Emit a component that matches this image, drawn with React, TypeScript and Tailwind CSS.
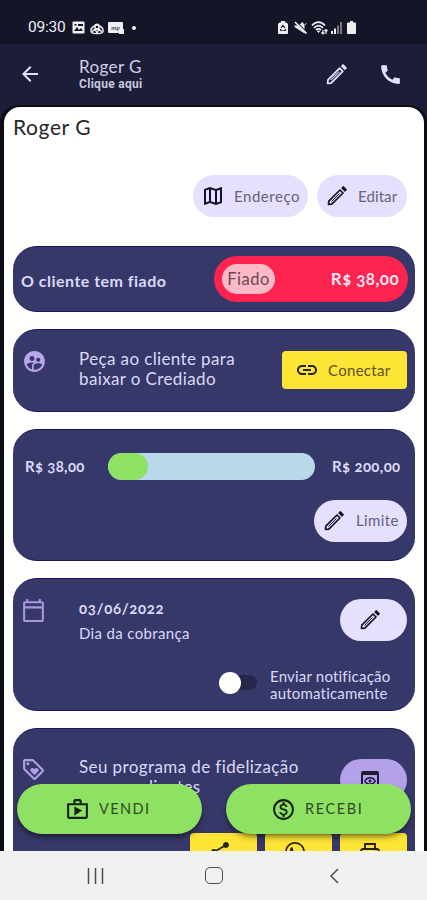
import type { ReactNode } from "react";
import {
  MdArrowBack,
  MdCall,
  MdLink,
  MdOutlineCalendarToday,
  MdOutlineLoyalty,
  MdOutlineMap,
  MdOutlineMonetizationOn,
  MdOutlinePreview,
  MdOutlinePrint,
  MdOutlineShop,
  MdShare,
  MdSupervisedUserCircle,
  MdWhatsapp,
} from "react-icons/md";

const PencilIcon = ({ size = 24 }: { size?: number }) => (
  <svg className="shrink-0" width={size} height={size} viewBox="0 0 24 24" fill="none" stroke="currentColor" strokeLinejoin="round">
    <path d="M3.500 20.500l0.300-3.300L15 6l3 3L6.800 20.200z" strokeWidth="1.700" />
    <path d="M6.500 17.500l8-8" strokeWidth="1" />
    <path d="M17 4l1.300-1.300 3 3L20 7z" fill="currentColor" strokeWidth="1.200" />
  </svg>
);

const Card = ({ className, children }: { className: string; children: ReactNode }) => (
  <section className={`shrink-0 rounded-[24px] border-y border-[#1c1558] bg-[#363869] text-[#dcd8f8] ${className}`}>
    {children}
  </section>
);

const StatusBar = () => (
  <div className="flex h-[44px] shrink-0 items-center bg-[#141526] pt-[11px] pl-[28px] font-['Roboto',sans-serif] text-[#efeff2]">
    <span className="w-[38px] text-[15.5px] tracking-[-0.2px]">09:30</span>
    <svg className="ml-[6px]" width="13" height="13" viewBox="0 0 13 13">
      <rect x="0.5" y="0.5" width="12" height="12" rx="1" fill="currentColor" />
      <path d="M2 10l3-4 2 3 2-2 2 3z" fill="#141526" />
      <rect x="2.5" y="3" width="2" height="1.5" fill="#141526" />
      <rect x="6" y="3" width="5" height="2" fill="#141526" />
    </svg>
    <svg className="ml-[5px]" width="14" height="14" viewBox="0 0 14 14" fill="none" stroke="currentColor" strokeWidth="1.4">
      <path d="M4.5 5a2.7 2.7 0 0 1 5 0c3 1.500 4.500 3.500 3 6.500-2 1.500-9 1.500-11 0-1.500-3 0-5 3-6.500z" />
      <circle cx="7" cy="6" r="2" />
      <path d="M2 11l3-3h4l3 3M5 8l2 4 2-4" />
    </svg>
    <span className="relative ml-[4px] flex h-[11px] w-[15px] items-center justify-center rounded-[1px] bg-[#efeff2] text-[6px] font-bold text-[#55576a]">
      mp
      <span className="absolute -right-px -bottom-px size-[5px] bg-[#efeff2]" />
    </span>
    <span className="ml-[9px] size-[4px] rounded-full bg-[#efeff2]" />

    <svg className="ml-[142px]" width="10" height="13" viewBox="0 0 10 13">
      <path d="M3 0h4v1.500h1.500L10 3v9a1 1 0 0 1-1 1H1a1 1 0 0 1-1-1V3l1.500-1.500H3z" fill="currentColor" />
      <path d="M3 7l2-2.500L7 7M2.500 9.500h2M5.500 9.500h2M2.500 8v1.500M7.500 8v1.500" fill="none" stroke="#141526" strokeWidth="1.200" />
    </svg>
    <svg className="ml-[6px]" width="13" height="13" viewBox="0 0 13 13" fill="none" stroke="currentColor">
      <path d="M0.500 4.500h4L8.500 1l2 3v8.500L6 9.500 0.500 6z" fill="currentColor" stroke="none" />
      <path d="M2 0.500l11 11" stroke="#141526" strokeWidth="1.200" />
      <path d="M1 1l11.500 11.500" strokeWidth="1.700" />
      <path d="M10.500 4l2-1.500" strokeWidth="1" />
    </svg>
    <svg className="ml-[4px]" width="17" height="14" viewBox="0 0 17 14" fill="none" stroke="currentColor">
      <path d="M1 4.500c4-4.500 9-4.500 13 0M3 6.800c3-3 6-3 9 0M5 9c2-1.700 3-1.700 5 0" strokeWidth="1.700" />
      <path d="M6.300 10.200h2.400L7.500 11.500z" fill="currentColor" />
      <path d="M12 9v4M10.300 11.500L12 13l1.500-1.500M15 13V9M13.500 10L15 8.500l1.500 1.500" strokeWidth="1.200" />
    </svg>
    <svg className="ml-[3px]" width="11" height="12" viewBox="0 0 11 12" fill="currentColor">
      <path d="M0 9h2v3H0zM3 6.500h2V12H3z" />
      <path d="M6 3.500h2V12H6zM9 0h2v12H9z" opacity="0.450" />
    </svg>
    <svg className="ml-[5px]" width="9" height="13" viewBox="0 0 9 13" fill="currentColor">
      <path d="M3 0h3v1.500h2A1 1 0 0 1 9 2.500V12a1 1 0 0 1-1 1H1a1 1 0 0 1-1-1V2.500a1 1 0 0 1 1-1h2z" />
    </svg>
  </div>
);

const Header = () => (
  <header className="flex h-[60px] shrink-0 items-center pl-[18px] text-[#e4e0fb]">
    <MdArrowBack size={24} />
    <div className="ml-[37px] flex w-[245px] flex-col">
      <span className="text-[17px] leading-[20px] tracking-[0.4px] text-[#d2cfec]">Roger G</span>
      <span className="font-['Roboto',sans-serif] text-[12px] leading-[14px] font-bold tracking-[0.3px] text-[#c9c8df]">Clique aqui</span>
    </div>
    <PencilIcon size={25} />
    <MdCall size={25} className="ml-[29px]" />
  </header>
);

const Chip = ({ icon, label, className }: { icon: ReactNode; label?: string; className: string }) => (
  <button className={`flex h-[42px] items-center rounded-full bg-[#e6dffd] text-[#15132b] ${className}`}>
    {icon}
    {label && <span className="text-[15px] text-[#66637a]">{label}</span>}
  </button>
);

const quickActions = [
  { name: "share", Icon: MdShare },
  { name: "whatsapp", Icon: MdWhatsapp },
  { name: "print", Icon: MdOutlinePrint },
];

const NavBar = () => (
  <nav className="flex h-[49px] shrink-0 items-center bg-[#f1f1f2] text-[#4c4c50]">
    <svg className="ml-[87px]" width="17" height="16" viewBox="0 0 17 16" stroke="currentColor" strokeWidth="1.500">
      <path d="M1.500 0v16M8.500 0v16M15.500 0v16" />
    </svg>
    <span className="ml-[101px] h-[17px] w-[18px] rounded-[5px] border-[1.5px] border-[#4c4c50]" />
    <svg className="ml-[107px]" width="9" height="16" viewBox="0 0 9 16" fill="none" stroke="currentColor" strokeWidth="1.500">
      <path d="M8 1L1 8l7 7" />
    </svg>
  </nav>
);

export default function App() {
  return (
    <div className="flex h-[900px] w-[427px] flex-col overflow-hidden bg-[#1c1e39] font-['Lato',sans-serif]">
      <StatusBar />
      <Header />

      <main className="relative h-[747px] shrink-0 overflow-hidden pt-px">
        <div className="flex h-[780px] flex-col rounded-t-[18px] border-t-2 border-r-3 border-l-4 border-[#0d0d15] bg-[#0d0d15]">
          <div className="flex grow flex-col gap-[17px] rounded-t-[16px] bg-white px-[9px]">
            <div className="h-[122px] shrink-0">
              <h1 className="pt-[6px] text-[21px] leading-[28px] tracking-[0.6px] text-[#252529]">Roger G</h1>
              <div className="mt-[34px] flex justify-end gap-[9px] pr-[8px]">
                <Chip className="w-[115px] gap-[9px] pl-[8px] tracking-[0.55px]" icon={<MdOutlineMap size={24} />} label="Endereço" />
                <Chip className="w-[90px] gap-[9px] pl-[8px] tracking-[0.1px]" icon={<PencilIcon />} label="Editar" />
              </div>
            </div>

            <Card className="flex h-[66px] items-center justify-between pr-[7px] pl-[8px]">
              <span className="pt-[4px] text-[16px] font-bold tracking-[0.48px]">O cliente tem fiado</span>
              <div className="flex h-[46px] w-[194px] items-center justify-between rounded-full bg-[#fd234f] pr-[9px] pl-[8px]">
                <span className="flex h-[30px] w-[53px] items-center justify-center rounded-full bg-[#feb9c7] text-[16.5px] tracking-[0.5px] text-[#6c4754]">Fiado</span>
                <span className="text-[17px] font-bold tracking-[0.4px] text-[#ffe5f2] oldstyle-nums">R$ 38,00</span>
              </div>
            </Card>

            <Card className="flex h-[82.5px] pr-[8px] pl-[9px]">
              <MdSupervisedUserCircle size={25} className="mt-[19px] text-[#b9a7ec]" />
              <p className="mt-[19px] ml-[32px] w-[203px] text-[17px] leading-[20px] tracking-[0.38px] whitespace-nowrap">
                Peça ao cliente para
                <br />
                baixar o Crediado
              </p>
              <button className="mt-[21px] flex h-[38px] w-[125px] items-center gap-[9px] rounded-[4px] bg-[#fee435] pl-[13px] text-[#29260f]">
                <MdLink size={24} />
                <span className="text-[15px] tracking-[0.3px] text-[#5c521a]">Conectar</span>
              </button>
            </Card>

            <Card className="h-[132.5px]">
              <div className="mt-[23px] flex h-[27px] items-center pl-[12px] text-[15px] font-bold oldstyle-nums">
                <span className="w-[83px] tracking-[0.3px]">R$ 38,00</span>
                <div className="h-full w-[207px] overflow-hidden rounded-full bg-[#b9d9eb]">
                  <div className="h-full w-[40px] rounded-full bg-[#8fe163]" />
                </div>
                <span className="ml-[17px] tracking-[0.35px]">R$ 200,00</span>
              </div>
              <div className="mt-[20px] flex justify-end pr-[8px]">
                <Chip className="w-[93px] gap-[10px] pl-[8px] tracking-[0.4px]" icon={<PencilIcon />} label="Limite" />
              </div>
            </Card>

            <Card className="h-[132.5px]">
              <div className="flex h-[82px] pr-[8px] pl-[8px]">
                <MdOutlineCalendarToday size={25} className="mt-[19px] text-[#a996df]" />
                <div className="mt-[18px] ml-[33px] flex grow flex-col">
                  <strong className="text-[15px] leading-[22px] tracking-[0.65px] oldstyle-nums">03/06/2022</strong>
                  <span className="mt-[3px] text-[15px] leading-[22px] tracking-[0.35px]">Dia da cobrança</span>
                </div>
                <Chip className="mt-[20px] w-[67px] justify-center pr-[8px]" icon={<PencilIcon />} />
              </div>
              <div className="mt-[3px] flex items-center pl-[206px]">
                <span className="flex h-[15px] w-[38px] items-center rounded-full bg-[#25264a]">
                  <span className="size-[22px] shrink-0 rounded-full bg-white" />
                </span>
                <p className="mt-[4px] ml-[13px] text-[15px] leading-[16.5px] tracking-[0.2px] whitespace-nowrap">
                  Enviar notificação
                  <br />
                  automaticamente
                </p>
              </div>
            </Card>

            <Card className="h-[150px]">
              <div className="flex h-[104px] pr-[8px] pl-[8px]">
                <MdOutlineLoyalty size={25} className="mt-[28px] text-[#b2a0e7]" />
                <p className="mt-[28px] ml-[33px] grow text-[17px] leading-[20px] tracking-[0.4px] whitespace-nowrap">
                  Seu programa de fidelização
                  <br />
                  para os clientes
                </p>
                <span className="mt-[30px] flex h-[42px] w-[67px] items-center justify-center rounded-full bg-[#b5a1e9] pr-[8px] text-[#211b3a]">
                  <MdOutlinePreview size={24} />
                </span>
              </div>
              <div className="flex justify-end gap-[8px] pr-[8px]">
                {quickActions.map(({ name, Icon }) => (
                  <button key={name} aria-label={name} className="flex h-[38px] w-[67px] items-center justify-center rounded-[4px] bg-[#fee435] pr-[8px] text-[#29260f]">
                    <Icon size={24} />
                  </button>
                ))}
              </div>
            </Card>
          </div>
        </div>

        {/* Floating sale / payment actions */}
        <div className="absolute bottom-[17px] left-[17px] flex gap-[24px] text-[14.5px] text-[#304b24]">
          <button className="flex h-[50px] w-[185px] items-center gap-[9px] rounded-full bg-[#8fe163] pl-[48px] tracking-[1.4px] shadow-md shadow-black/40">
            <MdOutlineShop size={25} className="text-[#152210]" />
            VENDI
          </button>
          <button className="flex h-[50px] w-[185px] items-center gap-[9px] rounded-full bg-[#8fe163] pl-[45px] tracking-[1.6px] shadow-md shadow-black/40">
            <MdOutlineMonetizationOn size={25} className="text-[#152210]" />
            RECEBI
          </button>
        </div>
      </main>

      <NavBar />
    </div>
  );
}
